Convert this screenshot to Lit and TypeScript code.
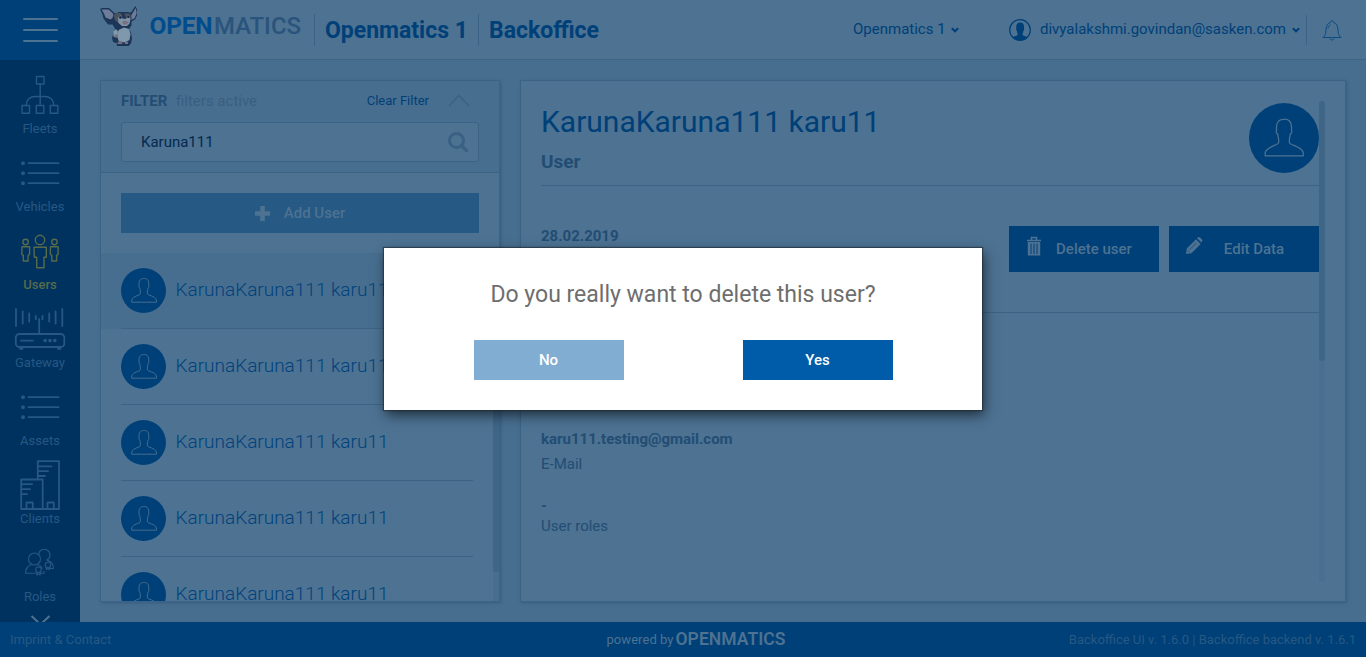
import { LitElement, html, css, svg, nothing } from "lit";
import { customElement, property } from "lit/decorators.js";

const PERSON =
  "M13.2 20.2c-.3-1-.5-2-.5-3-.9-.7-1.2-2.1-.8-2.9-.6-4.500 1.300-6.800 4.400-6.800 2.300-.4 5.900.600 5.200 6.800.4.8.1 2.200-.8 2.900 0 1-.2 2-.5 3v2.500c.3 1.600 7.800 2.300 9 6.300v2.200H4.500V29c1.200-4 8.400-4.700 8.700-6.300z";

const NAV = [
  {
    label: "Fleets",
    icon: svg`<g class="ln"><path d="M36.500 16.500h7.500v7.500h-7.500zM22 45.500h7.500v7.800H22zM36.300 45.500h7.500v7.800h-7.500zM50.300 45.500h7.500v7.800h-7.500zM40.200 24v21.500M26 45.500c.5-5.500 3.500-9 9.500-9h9c6 0 9 3.500 9.500 9"/></g>`,
  },
  {
    label: "Vehicles",
    icon: svg`<g class="ln thick"><path d="M28.500 25.200h30M28.500 35.200h30M28.500 45.200h30"/></g><g class="fl"><circle cx="23" cy="25.200" r="2"/><circle cx="23" cy="35.200" r="2"/><circle cx="23" cy="45.200" r="2"/></g>`,
  },
  {
    label: "Users",
    active: true,
    icon: svg`<g class="ln"><circle cx="40" cy="24" r="4.700"/><path d="M34 31.200h12.300v10h-2.300v10.500h-7.300V41.200h-2.400zM22 30.800h7.600v7.500l-1.500 1v5.700h-4.800v-5.700l-1.500-1zM50.500 30.800h7.600v7.500l-1.500 1v5.700h-4.800v-5.700l-1.500-1z"/><circle cx="25.600" cy="26" r="2.700"/><circle cx="54.400" cy="26" r="2.700"/></g>`,
  },
  {
    label: "Gateway",
    icon: svg`<g class="ln thick"><rect x="15.800" y="40" width="48.500" height="13" rx="3.500"/><path d="M16 15v17M22.700 17.500v12M29.200 19.500v8M35.800 21.800v3.500M42.500 21.800v3.500M49.200 19.500v8M55.600 17.500v12M62.300 15v17M39.200 25v15M21 46.600h12M20 54.800h2.500M58 54.800h2.500"/></g><g class="fl"><circle cx="45.200" cy="46.600" r="1.800"/><circle cx="50" cy="46.600" r="1.800"/><circle cx="54.800" cy="46.600" r="1.800"/></g>`,
  },
  {
    label: "Assets",
    icon: svg`<g class="ln thick"><path d="M28.500 25.200h30M28.500 35.200h30M28.500 45.200h30"/></g><g class="fl"><circle cx="23" cy="25.200" r="2"/><circle cx="23" cy="35.200" r="2"/><circle cx="23" cy="45.200" r="2"/></g>`,
  },
  {
    label: "Clients",
    icon: svg`<g class="ln thick"><path d="M37.800 28V11.200H59V59H21.200V29.500h21.500V59M38 16.300h13.500M38 21.200h10M38 26h7M21 34.200h11M21 39.200h9M21 44.200h6M26.500 59v-6.500h6.300V59M47.500 59v-6.500h6.300V59"/></g>`,
  },
  {
    label: "Roles",
    icon: svg`<g class="ln thin"><path d="M31.500 36.500c-4 1.500-6 4-6 8.800h10M37.500 36.500c2.200.8 3.800 2 4.800 3.700"/><path d="M38.600 26.500a5.700 5.700 0 1 1 8.200 5.600c4.300 1.200 6.700 4 6.700 8.400h-3"/><circle cx="34.500" cy="31" r="6"/><circle cx="38.500" cy="41.800" r="2.800"/><circle cx="48" cy="37" r="2.800"/><path d="M36.800 44v3l1.700-1 1.700 1v-3M46.300 39.200v2.300l1.700-1 1.700 1v-2.300M41 45.300h3v-2"/></g>`,
  },
];

@customElement("nav-item")
export class NavItem extends LitElement {
  @property({ attribute: false }) icon: unknown = nothing;
  @property() label = "";
  @property({ type: Boolean, reflect: true }) active = false;
  static styles = css`
    :host { display: flex; flex-direction: column; align-items: center; height: 78px; color: #265883; }
    :host([active]) { color: #576a4b; }
    svg { width: 80px; height: 60px; flex: none; margin-bottom: -1px; }
    .ln { fill: none; stroke: currentColor; stroke-width: 1.4; stroke-linejoin: round; stroke-linecap: round; }
    .thick { stroke-width: 1.800; }
    .thin { stroke-width: 1.100; }
    .fl { fill: currentColor; }
    .label { font: 13px/20px Roboto, sans-serif; }
    :host([active]) .label { font-weight: 500; }
  `;
  render() {
    return html`<svg viewBox="0 0 80 60">${this.icon}</svg><span class="label">${this.label}</span>`;
  }
}

@customElement("user-row")
export class UserRow extends LitElement {
  @property() name = "";
  static styles = css`
    :host { display: block; height: 76px; padding: 0 20px; flex: none; }
    :host([selected]) { background: #486e8f; }
    .row { width: 352px; height: 75px; border-bottom: 1px solid #3c6385; display: flex; align-items: center; gap: 9.500px; }
    svg { width: 45px; height: 45px; flex: none; }
    .name { font: 300 19px/26px Roboto, sans-serif; color: #00427c; white-space: nowrap; padding-bottom: 2px; }
  `;
  render() {
    return html`<div class="row">
      <svg viewBox="0 0 45 45">
        <circle cx="22.500" cy="22.500" r="22.500" fill="#004078" />
        <path transform="translate(6.200 3)" d=${PERSON} fill="none" stroke="#4d7292" stroke-width=".9" />
      </svg>
      <span class="name">${this.name}</span>
    </div>`;
  }
}

@customElement("app-root")
export class AppRoot extends LitElement {
  static styles = css`
    :host { display: block; position: relative; width: 1366px; height: 657px; overflow: hidden; font-family: Roboto, sans-serif; background: #486e8f; }
    * { box-sizing: border-box; }
    .page { height: 657px; display: grid; grid-template: 60px 562px 35px / 80px 1fr; }
    .burger { background: #004078; display: flex; flex-direction: column; align-items: center; padding-top: 18px; gap: 9px; }
    .burger i { width: 35px; height: 2px; background: #4d7292; border-radius: 1px; }
    .top { background: #4d7292; border-bottom: 1px solid #3f6486; display: flex; }
    .mascot { width: 40px; height: 42px; margin: 4px 0 0 19px; flex: none; }
    .logo { width: 156px; height: 36px; margin: 9px 0 0 9px; flex: none; }
    .crumb { height: 32px; margin-top: 14px; border-left: 1px solid #3c6385; padding-left: 10px; font: 700 23px/33px Roboto, sans-serif; color: #004078; white-space: nowrap; }
    .c1 { margin-left: 10px; width: 164px; }
    .c2 { width: 160px; }
    .sel { display: flex; align-items: center; height: 57px; color: #004078; font-size: 15px; white-space: nowrap; }
    .chev { width: 8px; height: 6px; margin: 3px 0 0 6px; }
    .tenant { margin-left: auto; width: 156px; }
    .tenant .chev { margin-left: 5px; }
    .account { width: 297px; }
    .account .pic { width: 22px; height: 22px; margin-right: 9px; margin-top: 3px; }
    .bell { border-left: 1px solid #3c6385; height: 30px; margin-top: 15px; width: 60px; padding: 4px 0 0 14px; }
    .bell svg { width: 22px; height: 23px; }
    .side { background: #003260; position: relative; overflow: hidden; }
    .more { position: absolute; left: 30px; top: 555px; width: 21px; height: 12px; }
    .main { padding: 20px; display: grid; grid-template-columns: 400px 826px; gap: 20px; }
    .card { background: #4d7292; border: 1px solid #3c6385; height: 522px; box-shadow: 1px 1px 3px rgba(20, 60, 100, 0.35); overflow: hidden; }
    .filter { height: 92px; background: #486e8f; border-bottom: 1px solid #3c6385; padding: 0 20px; }
    .fhead { height: 39px; margin-bottom: 2px; display: flex; align-items: center; font-size: 15px; }
    .fhead b { color: #234d73; font-weight: 700; width: 55px; }
    .fhead .act { color: #385f82; flex: 1; }
    .fhead .clear { font-size: 13px; color: #004078; }
    .fhead svg { width: 22px; height: 13px; margin: 0 9px 0 19px; }
    .search { height: 40px; background: #4d7292; border: 1px solid #3c6385; border-radius: 3px; display: flex; align-items: center; justify-content: space-between; padding: 0 9px 0 19px; font-size: 15px; color: #06294f; }
    .search svg { width: 21px; height: 21px; }
    .add { margin: 20px 20px 20px; height: 40px; background: #265983; color: #4d7292; display: flex; align-items: center; justify-content: center; gap: 14px; font: 500 15px/40px Roboto, sans-serif; }
    .add svg { width: 15px; height: 15px; }
    .listwrap { display: flex; height: 348px; }
    .list { flex: 1; margin-right: -6px; overflow: hidden; }
    .bar { width: 6px; height: 348px; background: #486e8f; flex: none; z-index: 1; }
    .thumb { height: 319px; background: #3f6587; border-radius: 0 0 3px 3px; }
    .detail { padding: 20px; display: flex; }
    .body { width: 778px; }
    .dhead { height: 85px; border-bottom: 1px solid #3c6385; display: flex; justify-content: space-between; }
    .dhead svg { width: 70px; height: 70px; margin-top: 2px; }
    .title { font: 400 30px/42px Roboto, sans-serif; color: #004078; }
    .role { font: 700 19px/37px Roboto, sans-serif; color: #234d73; }
    .acts { height: 127px; padding-top: 40px; border-bottom: 1px solid #3c6385; display: flex; gap: 10px; }
    .strong { font: 700 15px/20px Roboto, sans-serif; color: #234d73; }
    .plain { font: 400 15px/20px Roboto, sans-serif; color: #234d73; }
    .acts .strong { flex: 1; }
    .btn { width: 150px; height: 46px; background: #004078; color: #4d7292; display: flex; font: 500 15px/46px Roboto, sans-serif; }
    .btn svg { width: 18px; height: 22px; margin: 9px 0 0 16px; flex: none; }
    .btn span { flex: 1; text-align: center; padding-right: 14px; }
    .mail { margin-top: 116px; }
    .gap5 { margin-top: 5px; }
    .gap22 { margin-top: 22px; }
    .vbar { width: 6px; height: 481px; background: #496e8f; border-radius: 3px; flex: none; }
    .vthumb { height: 260px; background: #3f6587; border-radius: 3px; }
    .foot { grid-column: 1 / 3; background: #004078; display: grid; grid-template-columns: 1fr 220px 1fr; padding: 0 10px; font-size: 13px; line-height: 35px; color: #265883; white-space: nowrap; }
    .foot .r { text-align: right; }
    .foot svg { width: 220px; height: 35px; }
    .modal { position: absolute; left: 384px; top: 248px; width: 598px; height: 162px; background: #fff; box-shadow: 0 0 1px 1px rgba(30, 40, 50, 0.6), 2px 5px 12px rgba(0, 0, 0, 0.6); z-index: 5; }
    .q { padding-top: 31px; text-align: center; font: 400 23px/32px Roboto, sans-serif; color: #6e6e6e; }
    .choices { display: flex; justify-content: space-between; padding: 29px 89px 0 90px; }
    .choices span { width: 150px; height: 40px; padding-right: 1px; font: 500 15px/40px Roboto, sans-serif; color: #fff; text-align: center; background: #005ca9; }
    .choices .no { background: #82add2; }
  `;

  private chev() {
    return html`<svg class="chev" viewBox="0 0 8 6"><path d="M.8 1.200 4 4.300 7.200 1.200" fill="none" stroke="#004078" stroke-width="2" /></svg>`;
  }

  render() {
    return html`
      <div class="page">
        <div class="burger"><i></i><i></i><i></i></div>
        <header class="top">
          <svg class="mascot" viewBox="0 0 40 42">
            <path d="M1 5l2-1h7l6 5.500 4-1.500h8l4 .5 3-4.500 1.500-2 1.500 3.500v6l-2 4-3.500 2v4l-2.500 3.500 2 3.500 1 6-1 5-2 2v3l-1.500 1.500H18l-.5-4 1-2.500-4.500-1.500-1-4.500 2.500-6 .5-3-2.500-4H9L4.500 14.500l-1-4z" fill="#1d3658" />
            <path d="M2.500 5.500H9.500l5 4.500-1 4-2 1.500L6.500 13.500 5 9.500zM36.700 4l1 5-2 5-3 2-.5-4.500z" fill="#6d7c98" />
            <path d="m14.500 11.500 3-2.500h4l2 3-2.500 3-1 4-3.500-2zM25 9.500h5.500l1.500 3-1 4-3.500-2.500z" fill="#4c5360" />
            <path d="m19 13.500 2.500-2 2 3 3 .5 3-3 2 3-1 4.500-2.500 2.500h-5l-3.500-3z" fill="#7e92a6" />
            <path d="M23 18 26 16.500l3.500 1.500-1.500 2.500h-3.500z" fill="#786f80" />
            <path d="M19.500 26 25 23.500l5 1.500 1.500 5-1 6-4.500 2.500-6-1-2-5z" fill="#7f98ac" />
            <path d="M14.500 27.500 17 25l2 2.500-.5 4.500-2 1.500-2-1z" fill="#8599aa" />
            <path d="m15 31 3.500-.5.5 2-2 1.500zM18.500 38l4-1 1 3h-4.500zM26 37.500l3 .5v2h-3z" fill="#766f80" />
            <circle cx="21.300" cy="13.500" r="1.200" fill="#0c2140" /><circle cx="29.300" cy="13" r="1.100" fill="#0c2140" />
          </svg>
          <svg class="logo" viewBox="0 0 156 36">
            <text x="1.500" y="25.200" font-family="Roboto" font-size="24.500" font-weight="700" fill="#004c8c" textLength="63">OPEN</text>
            <text x="66" y="25.200" font-family="Roboto" font-size="24.500" font-weight="500" fill="#2a547b" textLength="87" lengthAdjust="spacingAndGlyphs">MATICS</text>
          </svg>
          <div class="crumb c1">Openmatics 1</div>
          <div class="crumb c2">Backoffice</div>
          <div class="sel tenant">Openmatics 1${this.chev()}</div>
          <div class="sel account">
            <svg class="pic" viewBox="0 0 22 22">
              <circle cx="11" cy="11" r="10.300" fill="none" stroke="#004078" stroke-width="1.200" />
              <path d="M8.900 15.500c-.5-1.300-.8-2.500-1-3.500-.8-.6-.9-1.800-.6-2.500-.5-4 1-6 3.700-6s4.500 1.500 4 6c.3.7.2 1.900-.6 2.500-.2 1-.5 2.200-1 3.500.8 1.500 3 1.700 5 2.700-4 4.300-11 4.300-15 0 2-1 4.700-1.200 5.500-2.700z" fill="#004078" />
            </svg>
            <span>divyalakshmi.govindan@sasken.com</span>${this.chev()}
          </div>
          <div class="bell">
            <svg viewBox="0 0 22 23"><path d="M2 18.500c2.500-2 2.800-4 3-8 .2-4 2-6.500 4.500-7 .2-2.500 2.800-2.500 3 0 2.500.5 4.300 3 4.500 7 .2 4 .5 6 3 8zM9 19.500c.5 2 3.500 2 4 0M7 9.500c.2-1.700 1-3 2.500-3.700" fill="none" stroke="#0d4b83" stroke-width="1" stroke-linejoin="round" /></svg>
          </div>
        </header>
        <nav class="side">
          ${NAV.map((n) => html`<nav-item .icon=${n.icon} label=${n.label} ?active=${!!n.active}></nav-item>`)}
          <svg class="more" viewBox="0 0 21 12"><path d="m1.500 1 9 8.500 9-8.500" fill="none" stroke="#4d7292" stroke-width="2" /></svg>
        </nav>
        <main class="main">
          <section class="card">
            <div class="filter">
              <div class="fhead">
                <b>FILTER</b><span class="act">filters active</span><span class="clear">Clear Filter</span>
                <svg viewBox="0 0 22 13"><path d="M1 12 11 1.500 21 12" fill="none" stroke="#3c6385" stroke-width="1.700" /></svg>
              </div>
              <div class="search">
                <span>Karuna111</span>
                <svg viewBox="0 0 21 21"><circle cx="8.500" cy="8.500" r="7" fill="none" stroke="#3a6183" stroke-width="3" /><path d="m13.500 13.500 5 5" stroke="#3a6183" stroke-width="3.400" stroke-linecap="round" /></svg>
              </div>
            </div>
            <div class="add">
              <svg viewBox="0 0 15 15"><path d="M7.500 0v15M0 7.500h15" stroke="#4d7292" stroke-width="4.600" /></svg>
              <span>Add User</span>
            </div>
            <div class="listwrap">
              <div class="list">
                ${[0, 1, 2, 3, 4].map((i) => html`<user-row name="KarunaKaruna111 karu11" ?selected=${i === 0}></user-row>`)}
              </div>
              <div class="bar"><div class="thumb"></div></div>
            </div>
          </section>
          <section class="card detail">
            <div class="body">
              <div class="dhead">
                <div><div class="title">KarunaKaruna111 karu11</div><div class="role">User</div></div>
                <svg viewBox="0 0 70 70">
                  <circle cx="35" cy="35" r="35" fill="#004078" />
                  <path transform="translate(9.300 4.800) scale(1.540)" d=${PERSON} fill="none" stroke="#4d7292" stroke-width=".8" />
                </svg>
              </div>
              <div class="acts">
                <div class="strong">28.02.2019</div>
                <div class="btn">
                  <svg viewBox="0 0 18 22"><path d="M2 5.500h14M6.500 5V2.500h5V5" fill="none" stroke="#4d7292" stroke-width="1.600" /><path d="M2.800 7h12.400v13.500H2.800z" fill="#4d7292" /><path d="M6 8.500V19M9 8.500V19M12 8.500V19" stroke="#004078" stroke-width="1" /></svg>
                  <span>Delete user</span>
                </div>
                <div class="btn">
                  <svg viewBox="0 0 18 22"><path d="m1 19 .8-5.500L11 4.300l4.700 4.700L6.500 18.200zM12 3.300l.8-.8q1.200-.8 2.200 0l2 2q.8 1 0 2.200l-.6.700z" fill="#4d7292" /><path d="m4.500 14.800 7-7M3 15.500l1.800 1.800" stroke="#004078" stroke-width=".6" /></svg>
                  <span>Edit Data</span>
                </div>
              </div>
              <div class="strong mail">karu111.testing@gmail.com</div>
              <div class="plain gap5">E-Mail</div>
              <div class="strong gap22">-</div>
              <div class="plain">User roles</div>
            </div>
            <div class="vbar"><div class="vthumb"></div></div>
          </section>
        </main>
        <footer class="foot">
          <span>Imprint &amp; Contact</span>
          <svg viewBox="0 0 220 35">
            <text x="33.500" y="22" font-family="Roboto" font-size="13" fill="#4d7292" textLength="67">powered by</text>
            <text x="102.500" y="22.800" font-family="Roboto" font-size="17.500" font-weight="600" fill="#4d7292" textLength="110">OPENMATICS</text>
          </svg>
          <span class="r">Backoffice UI v. 1.6.0 | Backoffice backend v. 1.6.1</span>
        </footer>
      </div>
      <div class="modal" role="dialog">
        <div class="q">Do you really want to delete this user?</div>
        <div class="choices"><span class="no">No</span><span>Yes</span></div>
      </div>
    `;
  }
}
